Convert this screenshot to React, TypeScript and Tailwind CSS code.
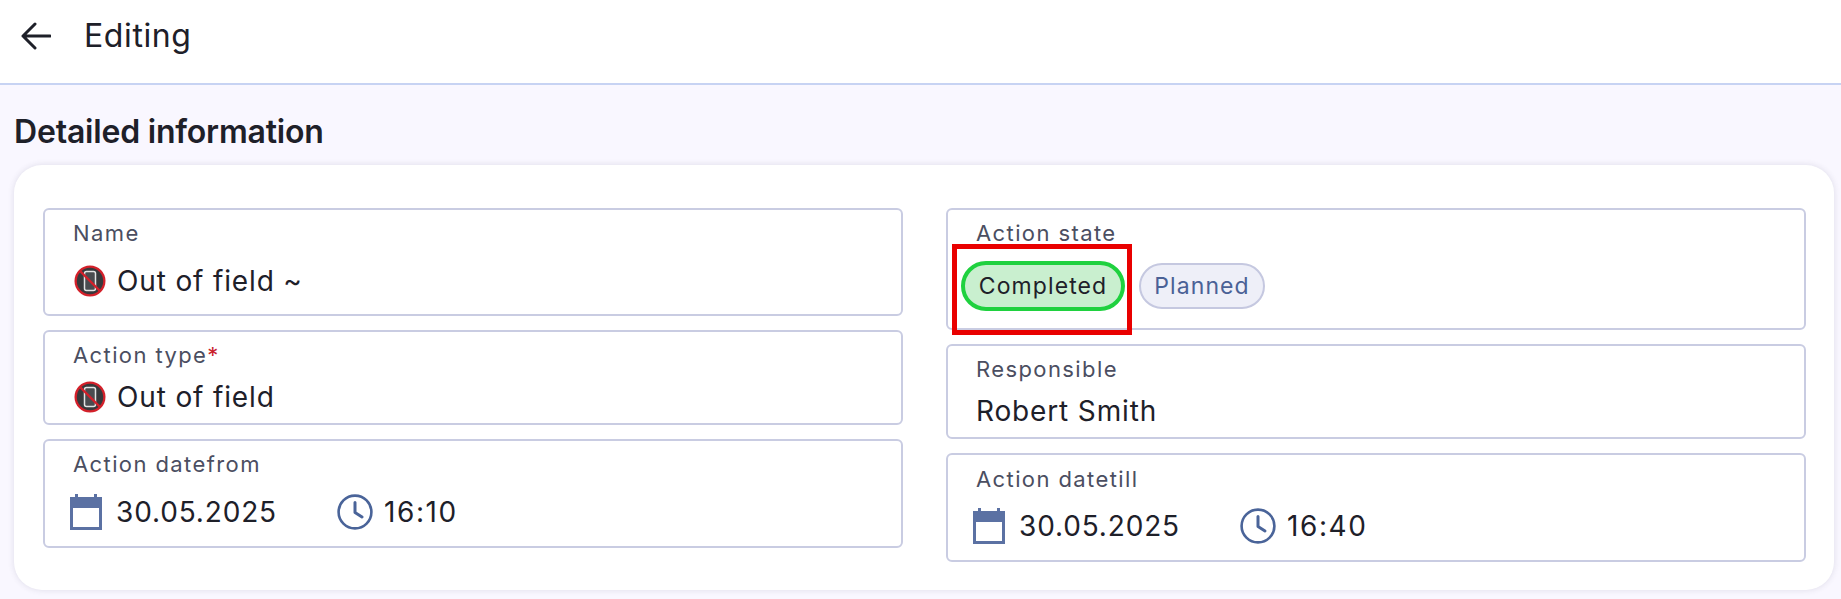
import React from "react";

const font = { fontFamily: "Inter, 'Liberation Sans', sans-serif" };

function NoPhone() {
  return (
    <svg width="32" height="32" viewBox="0 0 32 32" className="ml-[1px] shrink-0">
      <circle cx="16" cy="16" r="15.5" fill="#d3202a" />
      <circle cx="16" cy="16" r="13.2" fill="#37393c" />
      <rect x="10.5" y="6.5" width="11" height="19" rx="2" fill="#4a4c50" stroke="#e4e4e4" strokeWidth="1.5" />
      <path d="M6.5 6.5 L25.5 25.5" stroke="#d3202a" strokeWidth="2.4" />
    </svg>
  );
}

function Calendar() {
  return (
    <svg width="32" height="36" viewBox="0 0 32 36" className="shrink-0">
      <rect x="5" y="0" width="3" height="6" fill="#5b71a3" />
      <rect x="24" y="0" width="3" height="6" fill="#5b71a3" />
      <path d="M0 3H32V36H0Z M3 14V33H29V14Z" fill="#5b71a3" fillRule="evenodd" />
    </svg>
  );
}

function Clock() {
  return (
    <svg width="36" height="36" viewBox="0 0 36 36" fill="none" stroke="#4a6499" strokeWidth="2.6" className="shrink-0">
      <circle cx="18" cy="18" r="16.4" />
      <path d="M18 8.5V18.5L25 23" strokeLinecap="round" strokeLinejoin="round" strokeWidth="3" />
    </svg>
  );
}

function Label({ children }: { children: React.ReactNode }) {
  return <div className="text-[22px] leading-[24px] tracking-[1.4px] text-[#4b4e61]">{children}</div>;
}

function Value({ children }: { children: React.ReactNode }) {
  return <span className="text-[28px] leading-[32px] tracking-[0.85px] text-[#1e2029]">{children}</span>;
}

function Field({ label, className, children }: { label: React.ReactNode; className: string; children: React.ReactNode }) {
  return (
    <div className={`flex flex-col rounded-[6px] border-2 border-[#c9cce2] bg-white pl-[28px] ${className}`}>
      <Label>{label}</Label>
      {children}
    </div>
  );
}

function DateTime({ time, className }: { time: string; className: string }) {
  return (
    <div className={`ml-[-3px] flex items-center ${className}`}>
      <Calendar />
      <span className="ml-[14px] w-[221px]"><Value>30.05.2025</Value></span>
      <Clock />
      <span className="ml-[11px] text-[28px] leading-[32px] tracking-[1.6px] text-[#1e2029]">{time}</span>
    </div>
  );
}

export default function App() {
  return (
    <div style={font} className="flex h-[599px] w-[1841px] flex-col overflow-hidden bg-[#f9f7ff]">
      <header className="flex h-[85px] shrink-0 items-center border-b-2 border-[#c7d3f3] bg-white pb-[12px]">
        <svg width="30" height="28" viewBox="0 0 30 28" fill="none" stroke="#1e2029" strokeWidth="3" className="ml-[21px]">
          <path d="M29 14H2M14 2L2 14L14 26" strokeLinejoin="round" strokeLinecap="round" />
        </svg>
        <h1 className="ml-[33px] text-[32px] font-normal leading-[40px] tracking-[0.6px] text-[#1e2029]">Editing</h1>
      </header>
      <h2 className="ml-[14px] mt-[29px] text-[32px] font-semibold leading-[36px] tracking-[-0.2px] text-[#1e2029]">Detailed information</h2>
      <section className="ml-[14px] mr-[7px] mt-[15px] grid h-[425px] grid-cols-2 items-start gap-x-[43px] rounded-[28px] bg-white pl-[29px] pr-[28px] pt-[43px] shadow-[0_0_6px_rgba(60,60,90,0.14)]">
        <div className="flex flex-col gap-[14px]">
          <Field label="Name" className="h-[108px] pt-[11px]">
            <div className="mt-[20px] flex items-center gap-[11px]">
              <NoPhone />
              <Value>Out of field ~</Value>
            </div>
          </Field>
          <Field label={<>Action type<span className="text-[#c9202a]">*</span></>} className="h-[95px] pt-[11px]">
            <div className="mt-[14px] flex items-center gap-[11px]">
              <NoPhone />
              <Value>Out of field</Value>
            </div>
          </Field>
          <Field label="Action datefrom" className="h-[109px] pt-[11px]">
            <DateTime time="16:10" className="mt-[18px]" />
          </Field>
        </div>
        <div className="flex flex-col gap-[14px]">
          <Field label="Action state" className="relative h-[122px] pt-[11px]">
            <div className="ml-[-15px] mt-[16px] flex items-center gap-[14px]">
              <span className="flex h-[50px] w-[164px] items-center justify-center rounded-full border-4 border-[#1fd13f] bg-[#c9efcf] text-[23px] tracking-[1.1px] text-[#1e2029]">Completed</span>
              <span className="flex h-[46px] w-[126px] items-center justify-center rounded-full border-2 border-[#c5c8e0] bg-[#eeeff8] text-[23px] tracking-[1.1px] text-[#4a6196]">Planned</span>
            </div>
            <div className="absolute left-[4px] top-[34px] h-[91px] w-[180px] border-[5px] border-[#e90000]" />
          </Field>
          <Field label="Responsible" className="h-[95px] pt-[11px]">
            <div className="mt-[14px]"><Value>Robert Smith</Value></div>
          </Field>
          <Field label="Action datetill" className="h-[109px] pt-[12px]">
            <DateTime time="16:40" className="mt-[17px]" />
          </Field>
        </div>
      </section>
    </div>
  );
}
